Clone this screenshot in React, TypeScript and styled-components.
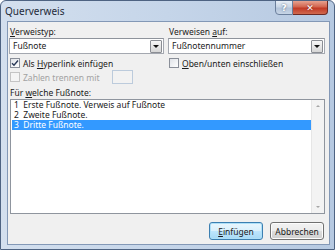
import React from 'react';
import styled, { createGlobalStyle } from 'styled-components';

const GlobalStyle = createGlobalStyle`
  html, body {
    margin: 0;
    padding: 0;
    background: #ffffff;
  }
  body {
    font-family: "Noto Sans", "Open Sans", sans-serif;
  }
`;

const ScFrame = styled.div`
  box-sizing: border-box;
  width: 335px;
  height: 250px;
  display: flex;
  flex-direction: column;
  border: 1px solid #4e6382;
  border-radius: 6px 6px 0 0;
  background: linear-gradient(90deg, #d3dfee 0%, #c5d5e9 50%, #b6c9e1 100%);
  padding: 0 4px 4px 6px;
  overflow: hidden;
`;

const ScTitleBar = styled.div`
  height: 20px;
  display: flex;
  align-items: flex-start;
  justify-content: space-between;
`;

const ScTitle = styled.span`
  font-size: 10px;
  line-height: 10px;
  color: #1e2a3a;
  margin: 5px 0 0 -2px;
`;

const ScTitleButtons = styled.div`
  display: flex;
  margin-top: -1px;
  margin-right: 2px;
`;

const ScCaptionButton = styled.div<{ $close?: boolean }>`
  box-sizing: border-box;
  height: 15px;
  width: ${(p) => (p.$close ? '35px' : '18px')};
  border: 1px solid ${(p) => (p.$close ? '#6d2a24' : '#6b7f9c')};
  border-left-width: ${(p) => (p.$close ? '0' : '1px')};
  border-radius: ${(p) => (p.$close ? '0 0 4px 0' : '0 0 0 4px')};
  background: ${(p) =>
    p.$close
      ? 'linear-gradient(180deg, #e7a290 0%, #d2654f 45%, #c23a26 55%, #d06a4f 100%)'
      : 'linear-gradient(180deg, #e6edf5 0%, #c9d6e6 45%, #b3c4da 55%, #c7d5e6 100%)'};
  color: #ffffff;
  font-family: "DejaVu Sans", sans-serif;
  font-size: 9px;
  font-weight: bold;
  display: flex;
  align-items: center;
  justify-content: center;
  text-shadow: 0 0 2px ${(p) => (p.$close ? '#6d1a10' : '#4a5a70')};
`;

const ScClient = styled.div`
  flex: 1;
  box-sizing: border-box;
  border: 1px solid #8398b6;
  background: #f0f0f0;
  padding: 4px 4px 4px 1px;
  display: flex;
  flex-direction: column;
  font-size: 8.5px;
  color: #1a1a1a;
`;

const ScColumns = styled.div`
  display: grid;
  grid-template-columns: 155px 1fr;
  column-gap: 4px;
`;

const ScColumn = styled.div`
  display: flex;
  flex-direction: column;
`;

const ScLabel = styled.div<{ $disabled?: boolean }>`
  height: 11px;
  line-height: 11px;
  padding-left: 1px;
  color: ${(p) => (p.$disabled ? '#a2a2a2' : '#1a1a1a')};
  white-space: nowrap;
`;

const ScKey = styled.span`
  text-decoration: underline;
`;

const ScCombo = styled.div`
  box-sizing: border-box;
  height: 16px;
  margin-top: 1px;
  border: 1px solid #a4a8b0;
  border-top-color: #8e939b;
  background: #ffffff;
  display: flex;
  align-items: center;
  padding: 0 1px 0 3px;
`;

const ScComboText = styled.span`
  flex: 1;
  line-height: 14px;
`;

const ScDropButton = styled.div`
  box-sizing: border-box;
  width: 12px;
  height: 13px;
  border: 1px solid #8b8e94;
  border-radius: 1px;
  background: linear-gradient(180deg, #f6f6f6 0%, #e6e6e6 50%, #d6d6d6 100%);
  display: flex;
  align-items: center;
  justify-content: center;

  &::after {
    content: '';
    border-left: 3px solid transparent;
    border-right: 3px solid transparent;
    border-top: 3px solid #111111;
  }
`;

const ScCheckRow = styled.div<{ $disabled?: boolean; $first?: boolean }>`
  display: flex;
  align-items: center;
  gap: 3px;
  height: 14px;
  margin-top: ${(p) => (p.$first ? '2px' : '0')};
  padding-left: 1px;
  color: ${(p) => (p.$disabled ? '#a2a2a2' : '#1a1a1a')};
  white-space: nowrap;
`;

const ScCheckBox = styled.div<{ $disabled?: boolean }>`
  box-sizing: border-box;
  width: 10px;
  height: 10px;
  border: 1px solid ${(p) => (p.$disabled ? '#c4c4c4' : '#8a8f99')};
  background: ${(p) =>
    p.$disabled ? '#f4f4f4' : 'linear-gradient(135deg, #e0e3e8 0%, #ffffff 100%)'};
  display: flex;
  align-items: center;
  justify-content: center;
`;

const ScSmallBox = styled.div`
  box-sizing: border-box;
  width: 21px;
  height: 14px;
  margin-left: 9px;
  border: 1px solid #bccbdc;
  background: #f2f2f2;
`;

const ScListLabel = styled(ScLabel)`
  margin-top: 3px;
`;

const ScList = styled.div`
  box-sizing: border-box;
  height: 115px;
  margin-top: 1px;
  margin-left: 1px;
  border: 1px solid #8f959e;
  background: #ffffff;
  display: flex;
`;

const ScRows = styled.div`
  flex: 1;
  padding: 0 0 0 1px;
`;

const ScRow = styled.div<{ $selected?: boolean }>`
  height: 10px;
  line-height: 10px;
  padding-left: 2px;
  white-space: pre;
  background: ${(p) => (p.$selected ? '#3399ff' : 'transparent')};
  color: ${(p) => (p.$selected ? '#ffffff' : '#1a1a1a')};
`;

const ScScrollBar = styled.div`
  width: 13px;
  background: #f3f3f3;
  border-left: 1px solid #e6e6e6;
  display: flex;
  flex-direction: column;
  justify-content: space-between;
  align-items: center;
  padding: 5px 0;
  box-sizing: border-box;
`;

const ScArrow = styled.div<{ $down?: boolean }>`
  width: 0;
  height: 0;
  border-left: 2px solid transparent;
  border-right: 2px solid transparent;
  ${(p) =>
    p.$down ? 'border-top: 2px solid #a6a6a6;' : 'border-bottom: 2px solid #a6a6a6;'}
`;

const ScButtonBar = styled.div`
  display: flex;
  justify-content: flex-end;
  gap: 7px;
  margin-top: 8px;
  padding-right: 1px;
`;

const ScButton = styled.div<{ $default?: boolean }>`
  box-sizing: border-box;
  width: 54px;
  height: 18px;
  border: 1px solid ${(p) => (p.$default ? '#3c7fb1' : '#707070')};
  border-radius: 3px;
  background: ${(p) =>
    p.$default
      ? 'linear-gradient(180deg, #eaf6fd 0%, #d9f0fc 50%, #bee6fd 51%, #a7d9f5 100%)'
      : 'linear-gradient(180deg, #f2f2f2 0%, #ebebeb 50%, #dddddd 51%, #cfcfcf 100%)'};
  box-shadow: inset 0 0 0 1px ${(p) => (p.$default ? '#aee0f8' : '#fcfcfc')};
  display: flex;
  align-items: center;
  justify-content: center;
  color: #1a1a1a;
`;

const footnotes = [
  '1  Erste Fußnote. Verweis auf Fußnote',
  '2  Zweite Fußnote.',
  '3  Dritte Fußnote.',
];

const CheckMark = () => (
  <svg width="8" height="8" viewBox="0 0 8 8">
    <path d="M1 4.2 L3 6.3 L7 1.5" fill="none" stroke="#2b3a58" strokeWidth="1.4" />
  </svg>
);

export default function App() {
  const selected = 2;
  return (
    <>
      <GlobalStyle />
      <ScFrame>
        <ScTitleBar>
          <ScTitle>{'Querverweis'}</ScTitle>
          <ScTitleButtons>
            <ScCaptionButton>{'?'}</ScCaptionButton>
            <ScCaptionButton $close>{'✕'}</ScCaptionButton>
          </ScTitleButtons>
        </ScTitleBar>
        <ScClient>
          <ScColumns>
            <ScColumn>
              <ScLabel><ScKey>{'V'}</ScKey>{'erweistyp:'}</ScLabel>
              <ScCombo>
                <ScComboText>{'Fußnote'}</ScComboText>
                <ScDropButton />
              </ScCombo>
              <ScCheckRow $first>
                <ScCheckBox><CheckMark /></ScCheckBox>
                <span>{'Als '}<ScKey>{'H'}</ScKey>{'yperlink einfügen'}</span>
              </ScCheckRow>
              <ScCheckRow $disabled>
                <ScCheckBox $disabled />
                <span>{'Zahlen trennen mit'}</span>
                <ScSmallBox />
              </ScCheckRow>
            </ScColumn>
            <ScColumn>
              <ScLabel>{'Verweisen '}<ScKey>{'a'}</ScKey>{'uf:'}</ScLabel>
              <ScCombo>
                <ScComboText>{'Fußnotennummer'}</ScComboText>
                <ScDropButton />
              </ScCombo>
              <ScCheckRow $first>
                <ScCheckBox />
                <span><ScKey>{'O'}</ScKey>{'ben/unten einschließen'}</span>
              </ScCheckRow>
            </ScColumn>
          </ScColumns>
          <ScListLabel>{'Für '}<ScKey>{'w'}</ScKey>{'elche Fußnote:'}</ScListLabel>
          <ScList>
            <ScRows>
              {footnotes.map((f, i) => (
                <ScRow key={f} $selected={i === selected}>{f}</ScRow>
              ))}
            </ScRows>
            <ScScrollBar>
              <ScArrow />
              <ScArrow $down />
            </ScScrollBar>
          </ScList>
          <ScButtonBar>
            <ScButton $default><span><ScKey>{'E'}</ScKey>{'infügen'}</span></ScButton>
            <ScButton>{'Abbrechen'}</ScButton>
          </ScButtonBar>
        </ScClient>
      </ScFrame>
    </>
  );
}
